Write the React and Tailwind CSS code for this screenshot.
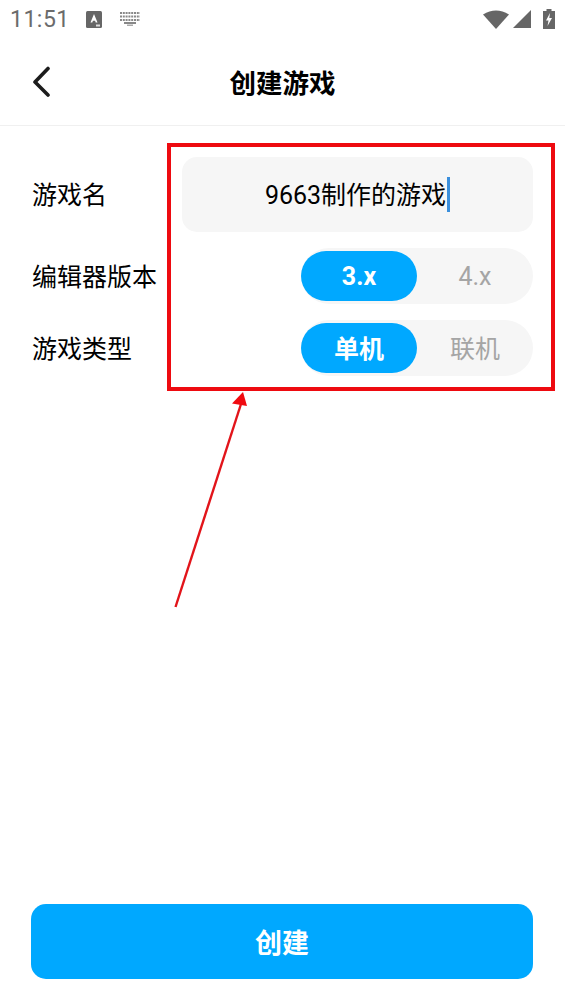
function Toggle({ left, right, textClass }) {
  return (
    <div className="flex h-[56px] w-[232px] items-center rounded-[28px] bg-[#f6f6f6]">
      <div className={`flex h-[50px] w-[116px] items-center justify-center rounded-[25px] bg-[#00a8ff] text-[25px] font-bold text-white ${textClass}`}>
        {left}
      </div>
      <div className={`flex h-[50px] w-[116px] items-center justify-center text-[25px] text-[#a5a5a5] ${textClass}`}>
        {right}
      </div>
    </div>
  );
}

function StatusBar() {
  return (
    <div className="flex h-[38px] items-center justify-between pl-[10px] pr-[10px] text-[#6b6b6b]">
      <div className="flex items-center">
        <span className="text-[23px] leading-none tracking-[0.5px]">11:51</span>
        <svg className="ml-[16px]" width="16" height="17" viewBox="0 0 16 17">
          <rect width="16" height="17" rx="1.5" fill="#666" />
          <path d="M4.500 11.500 8 3l3.500 8.500H9.700l-.6-1.700H6.900l-.6 1.700Z" fill="#fff" />
          <rect x="10" y="13.500" width="4" height="2" fill="#ddd" />
        </svg>
        <svg className="ml-[18px]" width="20" height="14" viewBox="0 0 20 14">
          <path d="M0 1h20M0 4.500h20M0 8h20" stroke="#888" strokeWidth="2" strokeDasharray="2 .8" />
          <rect x="4" y="10" width="12" height="2" fill="#888" />
          <rect x="7" y="12.500" width="6" height="1.500" fill="#aaa" />
        </svg>
      </div>
      <div className="flex items-center">
        <svg width="26" height="19" viewBox="0 0 26 19">
          <path d="M0 4.500Q13-3.500 26 4.500L13 19Z" fill="#666" />
        </svg>
        <svg className="ml-[4px]" width="18" height="18" viewBox="0 0 18 18">
          <path d="M0 18 18 0v18Z" fill="#666" />
        </svg>
        <svg className="ml-[12px]" width="12" height="20" viewBox="0 0 12 20">
          <path d="M3.500 0h5v2H12v18H0V2h3.500Z" fill="#666" />
          <path d="M7 4 3 11.500h2.500L4.500 17 9 9H6.300Z" fill="#fff" />
        </svg>
      </div>
    </div>
  );
}

export default function App() {
  return (
    <div
      className="relative h-[1004px] w-[565px] overflow-hidden bg-white text-black"
      style={{ fontFamily: '"Roboto", "Noto Sans CJK SC", sans-serif' }}
    >
      <StatusBar />

      {/* nav */}
      <div className="relative flex h-[88px] items-center justify-center border-b border-[#f0f0f0]">
        <svg className="absolute left-[30px] top-[27px]" width="24" height="32" viewBox="0 0 24 32" fill="none">
          <path d="M18 3.500 5 17l13 13" stroke="#1c1c1c" strokeWidth="3.600" strokeLinecap="round" strokeLinejoin="round" />
        </svg>
        <span className="pt-[5px] text-[26.500px] font-bold">创建游戏</span>
      </div>

      {/* form */}
      <div className="pl-[32px] pr-[32px] pt-[31px]">
        <div className="flex h-[75px] items-center justify-between">
          <span className="pt-[3px] text-[25px]">游戏名</span>
          <div className="flex h-[75px] w-[351px] items-center justify-center rounded-[15px] bg-[#f6f6f6] text-[25px]">
            <span className="pt-[2px]">9663制作的游戏</span>
            <span className="ml-[1px] inline-block h-[35px] w-[3px] shrink-0 bg-[#3b8fdc]" />
          </div>
        </div>
        <div className="mt-[16px] flex items-center justify-between">
          <span className="pt-[3px] text-[25px]">编辑器版本</span>
          <Toggle left="3.x" right="4.x" textClass="pt-[1px]" />
        </div>
        <div className="mt-[16px] flex items-center justify-between">
          <span className="pt-[3px] text-[25px]">游戏类型</span>
          <Toggle left="单机" right="联机" textClass="pt-[3px]" />
        </div>
      </div>

      {/* annotation drawn over the screenshot */}
      <div className="absolute left-[167px] top-[143px] h-[248px] w-[388px] border-[4px] border-[#ee0a10]" />
      <svg className="absolute left-0 top-0" width="565" height="1004" fill="none">
        <path d="M175.500 607 241 404" stroke="#e2141a" strokeWidth="2.400" />
        <path d="M243 392 232 403.500 247 406Z" fill="#f00a10" />
      </svg>

      <div className="absolute bottom-[25px] left-[31px] right-[32px] flex h-[75px] items-center justify-center rounded-[15px] bg-[#00a8ff] pt-[5px] text-[27px] font-bold text-white">
        创建
      </div>
    </div>
  );
}
